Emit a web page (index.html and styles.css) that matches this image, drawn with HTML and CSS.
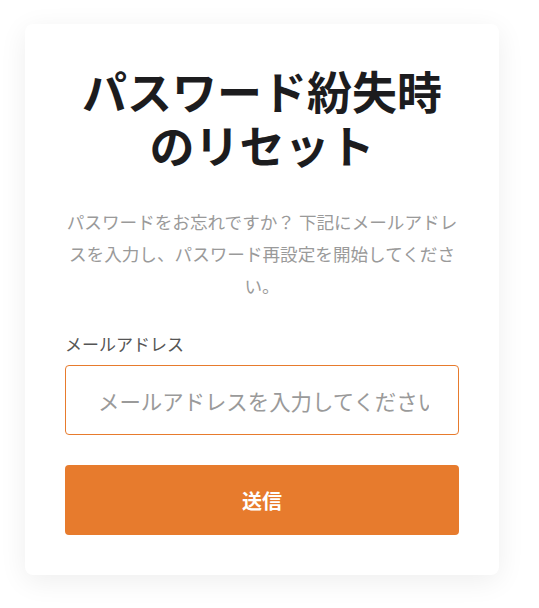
FILE: index.html
```html
<!DOCTYPE html>
<html lang="ja">
<head>
<meta charset="utf-8">
<link rel="stylesheet" href="styles.css">
</head>
<body>
<div class="card">
  <h1 class="title">パスワード紛失時のリセット</h1>
  <p class="desc">パスワードをお忘れですか？ 下記にメールアドレスを入力し、パスワード再設定を開始してください。</p>
  <form class="form">
    <label class="label" for="email">メールアドレス</label>
    <input class="input" id="email" type="email" placeholder="メールアドレスを入力してください">
    <button class="btn" type="button">送信</button>
  </form>
</div>
</body>
</html>
```
FILE: styles.css
```css
html, body {
  margin: 0;
  padding: 0;
  background: #ffffff;
}
body {
  padding: 24px 0 40px 25px;
  font-family: "Noto Sans CJK JP", "Noto Sans", sans-serif;
}
.card {
  box-sizing: border-box;
  width: 474px;
  height: 551px;
  background: #fff;
  border-radius: 8px;
  box-shadow: 0 6px 28px rgba(0, 0, 0, 0.07);
  padding: 40px;
  display: flex;
  flex-direction: column;
}
.title {
  margin: 0;
  font-size: 45px;
  line-height: 54px;
  font-weight: 700;
  color: #1c1c1e;
  text-align: center;
}
.desc {
  margin: 34px 0 0 0;
  font-size: 17.6px;
  line-height: 32px;
  color: #9a9a9a;
  text-align: center;
}
.form {
  display: flex;
  flex-direction: column;
  margin-top: 30px;
}
.label {
  font-size: 17px;
  line-height: 24px;
  color: #555;
  margin-bottom: 9px;
}
.input {
  box-sizing: border-box;
  height: 70px;
  width: 100%;
  border: 1px solid #e77b2d;
  border-radius: 4px;
  padding: 0 29px 0 32px;
  font-family: inherit;
  font-size: 21.4px;
  color: #333;
  outline: none;
}
.input::placeholder {
  color: #9a9a9a;
}
.btn {
  margin-top: 30px;
  height: 70px;
  border: none;
  border-radius: 4px;
  background: #e77b2d;
  color: #fff;
  font-family: inherit;
  font-size: 20px;
  font-weight: 700;
}
```
